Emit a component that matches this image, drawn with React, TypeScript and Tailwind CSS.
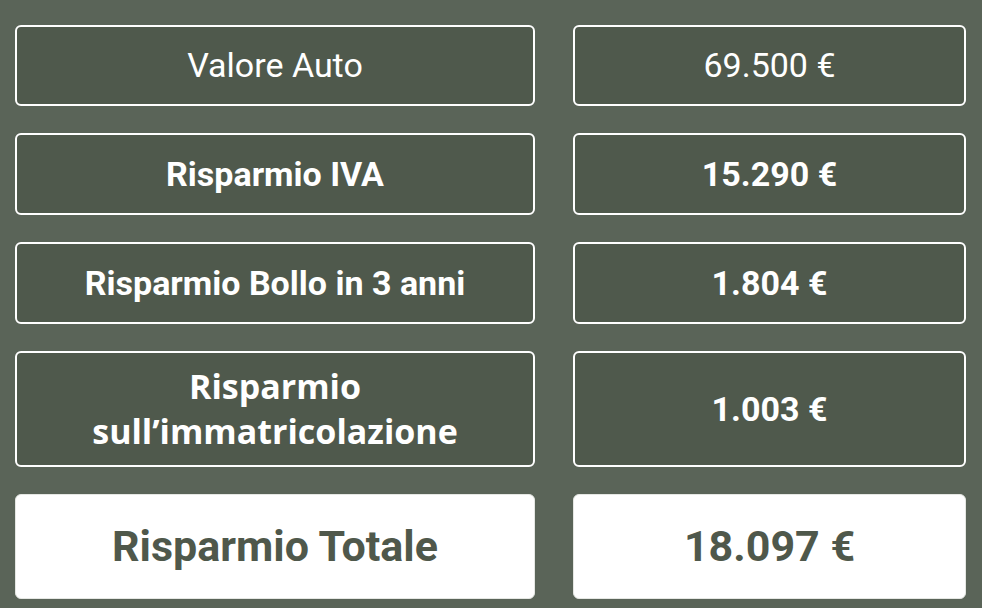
const rows = [
  { label: 'Valore Auto', value: '69.500 €', kind: 'plain' },
  { label: 'Risparmio IVA', value: '15.290 €', kind: 'bold' },
  { label: 'Risparmio Bollo in 3 anni', value: '1.804 €', kind: 'bold' },
  { label: 'Risparmio\nsull’immatricolazione', value: '1.003 €', kind: 'open' },
];

const roboto = { fontFamily: 'Roboto, "Liberation Sans", sans-serif' };

export default function App() {
  return (
    <div className="w-[982px] h-[608px] bg-[#5a6458] pl-[15px] pt-[25px]" style={roboto}>
      <div className="grid grid-cols-[520px_393px] grid-rows-[81px_82px_82px_116px_105px] gap-x-[38px] gap-y-[27px]">
        {rows.map(r => (
          <>
            <div
              key={r.label}
              className={`flex items-center justify-center rounded-[6px] border-2 border-white bg-[#4f594c] text-center text-white ${
                r.kind === 'plain'
                  ? 'text-[34px] font-normal'
                  : r.kind === 'bold'
                  ? 'text-[34px] font-bold'
                  : "font-['Open_Sans',sans-serif] text-[34px] font-bold leading-[45px] whitespace-pre-line"
              }`}
            >
              {r.label}
            </div>
            <div
              key={r.value}
              className={`flex items-center justify-center rounded-[6px] border-2 border-white bg-[#4f594c] text-[34px] text-white ${
                r.kind === 'plain' ? 'font-normal' : 'font-bold'
              }`}
            >
              {r.value}
            </div>
          </>
        ))}
        <div className="flex items-center justify-center rounded-[6px] border border-[#e5e7e3] bg-white text-[43px] font-bold text-[#4f584b]">
          Risparmio Totale
        </div>
        <div className="flex items-center justify-center rounded-[6px] border border-[#e5e7e3] bg-white text-[43px] font-bold text-[#4f584b]">
          18.097 €
        </div>
      </div>
    </div>
  );
}
